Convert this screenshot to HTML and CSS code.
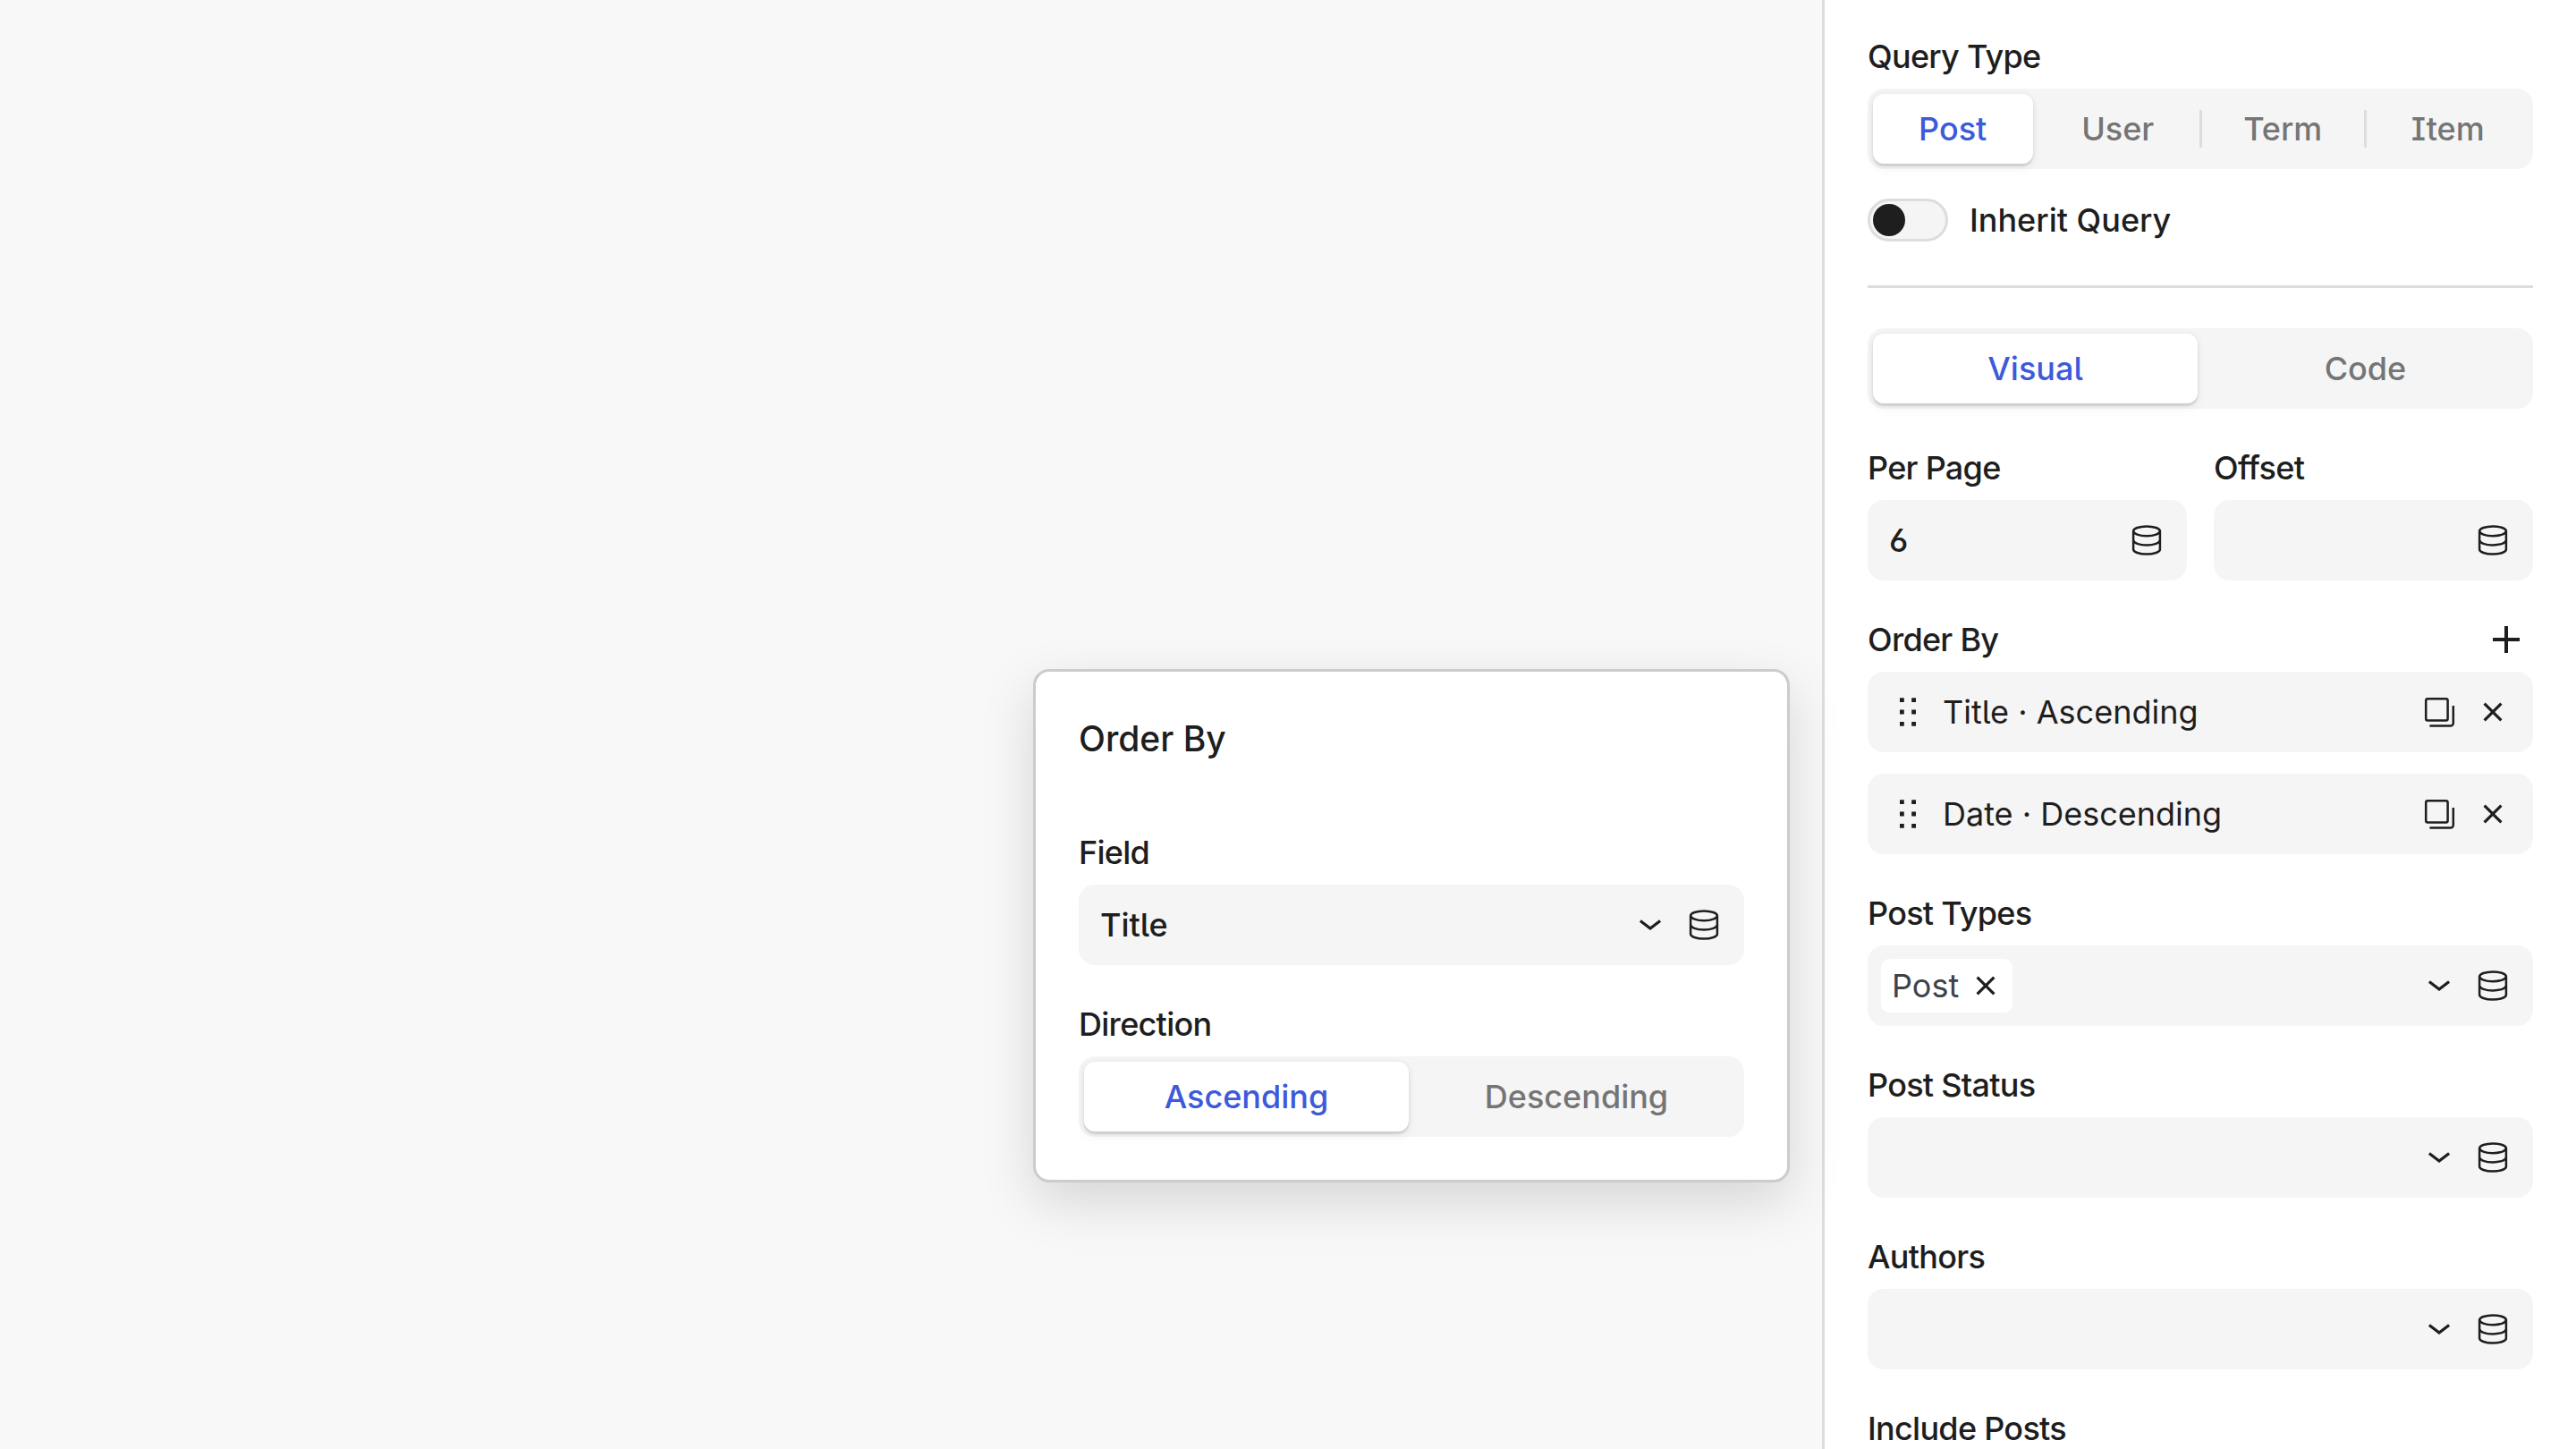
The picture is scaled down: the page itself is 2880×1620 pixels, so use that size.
FILE: index.html
```html
<!DOCTYPE html>
<html lang="en">
<head>
  <meta charset="UTF-8" />
  <meta name="viewport" content="width=device-width, initial-scale=1.0"/>
  <title>Query Settings</title>
  <link rel="stylesheet" href="styles.css">
</head>
<body>

  <!-- Icons -->
  <svg class="icon-defs" xmlns="http://www.w3.org/2000/svg">
    <symbol id="icon-database" viewBox="0 0 48 48">
      <ellipse cx="24" cy="13.8" rx="14.9" ry="5.4"/>
      <path d="M9.1 13.8V34.2C9.1 37.2 15.8 39.6 24 39.6S38.9 37.2 38.9 34.2V13.8"/>
      <path d="M9.1 24C9.1 27 15.8 29.4 24 29.4S38.9 27 38.9 24"/>
    </symbol>
    <symbol id="icon-chevron" viewBox="0 0 48 48">
      <path d="M12.9 19.4L24 28L35.1 19.4"/>
    </symbol>
    <symbol id="icon-plus" viewBox="0 0 48 48">
      <path d="M24 9V39M9 24H39"/>
    </symbol>
    <symbol id="icon-copy" viewBox="0 0 48 48">
      <rect x="9.2" y="9.2" width="24.4" height="24.4" rx="2"/>
      <path d="M39.8 17V36.4A3.2 3.2 0 0 1 36.6 39.6H13.4"/>
    </symbol>
    <symbol id="icon-close" viewBox="0 0 48 48">
      <path d="M14.6 14.6L33.4 33.4M33.4 14.6L14.6 33.4"/>
    </symbol>
    <symbol id="icon-drag" viewBox="0 0 48 48">
      <path d="M15 8.2h4.8v4.8h-4.8zM28.2 8.2h4.8v4.8h-4.8zM15 21.6h4.8v4.8h-4.8zM28.2 21.6h4.8v4.8h-4.8zM15 35h4.8v4.8h-4.8zM28.2 35h4.8v4.8h-4.8z"/>
    </symbol>
  </svg>

  <div class="editor">
    <main class="canvas"></main>

    <aside class="sidebar">
      <div class="field">
        <span class="label">Query Type</span>
        <div class="tabs">
          <button class="tab active">Post</button>
          <button class="tab">User</button>
          <button class="tab divided">Term</button>
          <button class="tab divided">Item</button>
        </div>
      </div>

      <div class="toggle-row">
        <span class="toggle"><span class="knob"></span></span>
        <span>Inherit Query</span>
      </div>

      <hr class="divider">

      <div class="tabs">
        <button class="tab active">Visual</button>
        <button class="tab">Code</button>
      </div>

      <div class="columns">
        <div class="field">
          <span class="label">Per Page</span>
          <div class="input">
            <span class="value">6</span>
            <svg class="icon"><use href="#icon-database"/></svg>
          </div>
        </div>
        <div class="field">
          <span class="label">Offset</span>
          <div class="input">
            <span class="value"></span>
            <svg class="icon"><use href="#icon-database"/></svg>
          </div>
        </div>
      </div>

      <div class="field">
        <div class="label-row">
          <span class="label">Order By</span>
          <svg class="icon icon-plus"><use href="#icon-plus"/></svg>
        </div>
        <div class="list">
          <div class="list-item">
            <svg class="icon icon-drag"><use href="#icon-drag"/></svg>
            <span class="item-name">Title · Ascending</span>
            <svg class="icon"><use href="#icon-copy"/></svg>
            <svg class="icon icon-bold"><use href="#icon-close"/></svg>
          </div>
          <div class="list-item">
            <svg class="icon icon-drag"><use href="#icon-drag"/></svg>
            <span class="item-name">Date · Descending</span>
            <svg class="icon"><use href="#icon-copy"/></svg>
            <svg class="icon icon-bold"><use href="#icon-close"/></svg>
          </div>
        </div>
      </div>

      <div class="field">
        <span class="label">Post Types</span>
        <div class="input has-chip">
          <span class="chip">Post <svg class="icon icon-bold"><use href="#icon-close"/></svg></span>
          <span class="value"></span>
          <svg class="icon icon-bold"><use href="#icon-chevron"/></svg>
          <svg class="icon"><use href="#icon-database"/></svg>
        </div>
      </div>

      <div class="field">
        <span class="label">Post Status</span>
        <div class="input">
          <span class="value"></span>
          <svg class="icon icon-bold"><use href="#icon-chevron"/></svg>
          <svg class="icon"><use href="#icon-database"/></svg>
        </div>
      </div>

      <div class="field">
        <span class="label">Authors</span>
        <div class="input">
          <span class="value"></span>
          <svg class="icon icon-bold"><use href="#icon-chevron"/></svg>
          <svg class="icon"><use href="#icon-database"/></svg>
        </div>
      </div>

      <div class="field">
        <span class="label">Include Posts</span>
        <div class="input">
          <span class="value"></span>
          <svg class="icon icon-bold"><use href="#icon-chevron"/></svg>
          <svg class="icon"><use href="#icon-database"/></svg>
        </div>
      </div>
    </aside>

    <!-- Order By popover -->
    <div class="popover">
      <h2 class="popover-title">Order By</h2>
      <div class="field">
        <span class="label">Field</span>
        <div class="input">
          <span class="value">Title</span>
          <svg class="icon icon-bold"><use href="#icon-chevron"/></svg>
          <svg class="icon"><use href="#icon-database"/></svg>
        </div>
      </div>
      <div class="field">
        <span class="label">Direction</span>
        <div class="tabs">
          <button class="tab active">Ascending</button>
          <button class="tab">Descending</button>
        </div>
      </div>
    </div>
  </div>

</body>
</html>
```
FILE: styles.css
```css
* {
  box-sizing: border-box;
}

body {
  margin: 0;
  font-family: Inter, sans-serif;
  font-size: 36px;
  font-weight: 500;
  line-height: 36px;
  color: #1e1e1e;
  background: #f8f8f8;
}

.icon-defs {
  display: none;
}

.editor {
  display: flex;
  position: relative;
  height: 100vh;
  overflow: hidden;
}

.canvas {
  flex: 1;
}

.sidebar {
  display: flex;
  flex-direction: column;
  gap: 48px;
  width: 843px;
  padding: 45px 48px;
  background: #fff;
  border-left: 3px solid #ddd;
}

.field {
  display: flex;
  flex-direction: column;
  gap: 18px;
  flex: 1 0 auto;
}

.sidebar > * {
  flex: none;
}

.label {
  letter-spacing: -0.72px;
}

.label-row {
  display: flex;
  align-items: center;
  justify-content: space-between;
  height: 36px;
  padding-right: 6px;
}

/* Segmented control */
.tabs {
  display: flex;
  gap: 6px;
  height: 90px;
  padding: 6px;
  border-radius: 18px;
  background: #f5f5f5;
}

.tab {
  position: relative;
  flex: 1 1 0;
  padding: 0;
  border: none;
  border-radius: 12px;
  background: none;
  color: #757575;
  font: inherit;
  font-feature-settings: "ss02", "ss01";
  cursor: pointer;
}

.tab.active {
  background: #fff;
  color: #3d5adb;
  box-shadow: 0 0 6px rgba(0, 0, 0, 0.07), 0 3px 2px rgba(0, 0, 0, 0.1), 0 6px 12px rgba(0, 0, 0, 0.05);
}

.tab.divided::before {
  content: "";
  position: absolute;
  left: -4.5px;
  top: 18px;
  width: 3px;
  height: 42px;
  background: #ddd;
}

/* Toggle */
.toggle-row {
  display: flex;
  align-items: center;
  gap: 24px;
  height: 48px;
  margin-top: -15px;
}

.toggle {
  width: 90px;
  height: 48px;
  padding: 3px;
  border: 3px solid #ddd;
  border-radius: 24px;
  background: #f5f5f5;
}

.knob {
  display: block;
  width: 36px;
  height: 36px;
  border-radius: 50%;
  background: #1e1e1e;
}

.divider {
  width: 100%;
  height: 3px;
  margin: 1px 0 -3px;
  border: none;
  background: #ddd;
}

.columns {
  display: grid;
  grid-template-columns: 1fr 1fr;
  gap: 30px;
}

/* Inputs */
.input {
  display: flex;
  align-items: center;
  gap: 12px;
  height: 90px;
  padding: 0 21px 0 24px;
  border-radius: 18px;
  background: #f5f5f5;
}

.input.has-chip {
  padding-left: 15px;
}

.value {
  flex: 1;
  font-feature-settings: "ss02", "ss01";
}

.chip {
  display: flex;
  align-items: center;
  gap: 6px;
  height: 60px;
  padding: 0 6px 0 12px;
  border-radius: 9px;
  background: #fff;
  color: #3c434a;
  font-weight: 400;
}

.list {
  display: flex;
  flex-direction: column;
  gap: 24px;
}

.list-item {
  display: flex;
  align-items: center;
  gap: 12px;
  height: 90px;
  padding: 0 21px;
  border-radius: 18px;
  background: #f5f5f5;
}

.item-name {
  flex: 1;
  padding-left: 3px;
  font-weight: 400;
  font-feature-settings: "ss02", "ss01";
}

/* Icons */
.icon {
  flex: none;
  width: 48px;
  height: 48px;
  fill: none;
  stroke: #1e1e1e;
  stroke-width: 2.5;
}

.icon-bold {
  stroke-width: 3.2;
}

.icon-plus {
  stroke-width: 4;
}

.icon-drag {
  fill: #1e1e1e;
  stroke: none;
}

.popover {
  position: absolute;
  left: 1155px;
  top: 748px;
  width: 846px;
  padding: 48px 48px;
  border: 3px solid #ccc;
  border-radius: 18px;
  background: #fff;
  box-shadow: 0 21px 60px rgba(0, 0, 0, 0.14);
}

.popover .field + .field {
  margin-top: 48px;
}

.popover-title {
  margin: 0 0 82px;
  font-size: 39px;
  font-weight: 500;
  line-height: 54px;
}
```
